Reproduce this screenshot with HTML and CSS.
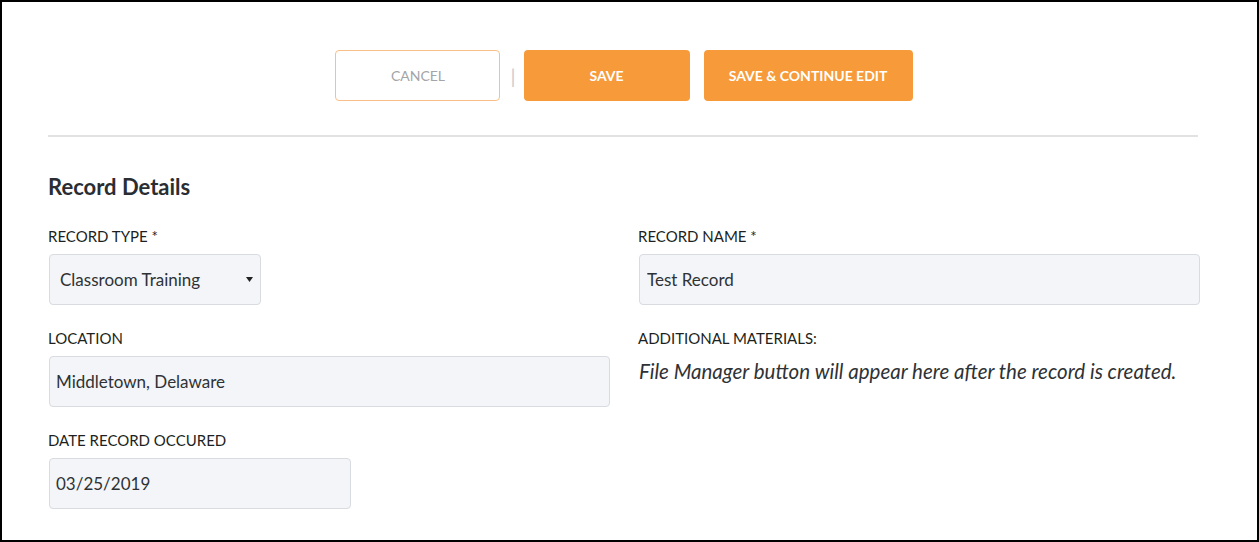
FILE: index.html
```html
<!DOCTYPE html>
<html lang="en">
  <head>
    <meta charset="UTF-8" />
    <meta name="viewport" content="width=device-width, initial-scale=1.0" />
    <title>Record Details</title>
    <link rel="stylesheet" href="styles.css">
  </head>
  <body>
    <div class="page">
      <div class="actions">
        <button class="btn btn-cancel">CANCEL</button>
        <span class="divider">|</span>
        <button class="btn btn-save">SAVE</button>
        <button class="btn btn-save btn-wide">SAVE &amp; CONTINUE EDIT</button>
      </div>

      <hr class="rule">

      <h2 class="section-title">Record Details</h2>

      <div class="form-grid">
        <div class="field">
          <label class="field-label">RECORD TYPE *</label>
          <div class="select-wrap">
            <select class="control control-select">
              <option>Classroom Training</option>
            </select>
            <svg class="select-arrow" width="7" height="5" viewBox="0 0 7 5"><path d="M0 0h7L3.5 5z" fill="#222"/></svg>
          </div>
        </div>

        <div class="field">
          <label class="field-label">RECORD NAME *</label>
          <input class="control" type="text" value="Test Record">
        </div>

        <div class="field">
          <label class="field-label">LOCATION</label>
          <input class="control control-tight" type="text" value="Middletown, Delaware">
        </div>

        <div class="field">
          <label class="field-label">ADDITIONAL MATERIALS:</label>
          <p class="note">File Manager button will appear here after the record is created.</p>
        </div>

        <div class="field">
          <label class="field-label">DATE RECORD OCCURED</label>
          <input class="control control-tight control-date" type="text" value="03/25/2019">
        </div>
      </div>
    </div>
  </body>
</html>
```

FILE: styles.css
```css
body {
  margin: 0;
  font-family: Lato, "Open Sans", sans-serif;
  color: #1d1f21;
  background: #fff;
}

.page {
  height: 542px;
  box-sizing: border-box;
  border: 2px solid #000;
  padding: 48px 59px 0 46px;
}

.actions {
  display: flex;
  justify-content: center;
  align-items: center;
  padding-left: 2px;
}

.btn {
  height: 51px;
  border-radius: 4px;
  font-family: Lato, "Open Sans", sans-serif;
  font-size: 14px;
  cursor: pointer;
}

.btn-cancel {
  width: 165px;
  background: #fff;
  border: 1px solid #f8bf88;
  color: #a3a5a8;
}

.divider {
  color: #c9ccd0;
  font-size: 20px;
  margin: 0 8px 0 10px;
}

.btn-save {
  width: 166px;
  background: #f79a39;
  border: none;
  color: #fff;
  font-weight: 700;
}

.btn-wide {
  width: 209px;
  margin-left: 14px;
}

.rule {
  border: none;
  height: 2px;
  background: #e2e2e2;
  margin: 34px 0 0 0;
}

.section-title {
  margin: 36px 0 0 0;
  font-size: 22px;
  font-weight: 700;
  color: #2a2e33;
  line-height: 28px;
}

.form-grid {
  display: grid;
  grid-template-columns: 561px 561px;
  column-gap: 29px;
  row-gap: 24px;
  margin: 26px 0 0 0;
}

.field {
  display: flex;
  flex-direction: column;
  align-items: flex-start;
}

.field-label {
  font-size: 15px;
  line-height: 18px;
  margin-bottom: 9px;
  color: #1d1f21;
}

.control {
  box-sizing: border-box;
  width: 561px;
  height: 51px;
  margin-left: 1px;
  background: #f3f5f8;
  border: 1px solid #d8dbdf;
  border-radius: 4px;
  padding: 0 7px;
  font-family: Lato, "Open Sans", sans-serif;
  font-size: 17px;
  color: #2f3235;
  outline: none;
}

.control-tight {
  padding-left: 6px;
}

.control-date {
  width: 302px;
}

.select-wrap {
  position: relative;
}

.control-select {
  width: 212px;
  padding-left: 10px;
  appearance: none;
  -webkit-appearance: none;
}

.select-arrow {
  position: absolute;
  right: 8px;
  top: 23px;
}

.note {
  margin: 2px 0 0 1px;
  font-size: 20.5px;
  line-height: 26px;
  font-style: italic;
  color: #2f3235;
}
```
